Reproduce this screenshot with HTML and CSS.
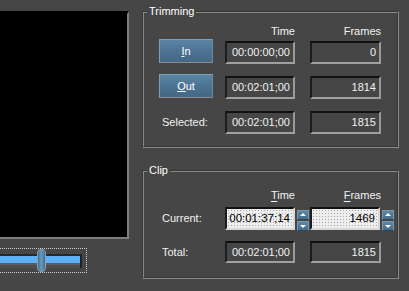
FILE: index.html
```html
<!DOCTYPE html>
<html>

<head>
    <meta name="viewport" content="width=device-width, initial-scale=1.0">
    <title>Trim clip</title>
    <link rel="stylesheet" href="styles.css">
</head>

<body>

    <div class="app">
      <div class="preview">
        <div class="video"></div>
        <div class="scrub">
          <div class="track"></div>
          <div class="thumb"></div>
        </div>
      </div>

      <div class="panel">
        <fieldset class="group trim">
          <legend>Trimming</legend>
          <div class="grid">
            <span></span>
            <span class="head">Time</span>
            <span class="head">Frames</span>

            <button class="btn"><u>I</u>n</button>
            <div class="field">00:00:00;00</div>
            <div class="field">0</div>

            <button class="btn"><u>O</u>ut</button>
            <div class="field">00:02:01;00</div>
            <div class="field">1814</div>

            <span class="label">Selected:</span>
            <div class="field">00:02:01;00</div>
            <div class="field">1815</div>
          </div>
        </fieldset>

        <fieldset class="group clip">
          <legend>Clip</legend>
          <div class="grid">
            <span></span>
            <span class="head"><u>T</u>ime</span>
            <span class="head"><u>F</u>rames</span>

            <span class="label">Current:</span>
            <div class="edit">
              <div class="field input">00:01:37;14</div>
              <div class="spin"><span class="up"></span><span class="down"></span></div>
            </div>
            <div class="edit">
              <div class="field input">1469</div>
              <div class="spin"><span class="up"></span><span class="down"></span></div>
            </div>

            <span class="label">Total:</span>
            <div class="field">00:02:01;00</div>
            <div class="field">1815</div>
          </div>
        </fieldset>
      </div>
    </div>

</body>

</html>
```

FILE: styles.css
```css
body {
    margin: 0;
    background: #464646;
    color: #f2f2f2;
    font-family: "Liberation Sans", Arial, sans-serif;
    font-size: 11px;
    overflow: hidden;
}

.app {
    display: flex;
    width: 409px;
    height: 291px;
}

/* left side: video + scrub bar */
.preview {
    width: 129px;
    flex: none;
}

.video {
    margin-top: 11px;
    height: 228px;
    box-sizing: border-box;
    background: #000;
    border-top: 3px solid #000;
    border-right: 2px solid #7e7e7e;
    border-bottom: 2px solid #7e7e7e;
}

.scrub {
    position: relative;
    margin-top: 9px;
    width: 87px;
    height: 25px;
    box-sizing: border-box;
    border: 1px dotted #cfcfcf;
    border-left: none;
}

.track {
    margin-top: 5px;
    width: 82px;
    height: 14px;
    box-sizing: border-box;
    border-top: 2px solid #2a2a2a;
    border-right: 2px solid #222;
    background: linear-gradient(#5eb1f6 0 7px, #5c5c5c 7px 9px, #4e4e4e 9px);
}

.thumb {
    position: absolute;
    left: 37px;
    top: 0;
    width: 9px;
    height: 23px;
    box-sizing: border-box;
    border-radius: 4px;
    border: 1px solid #8aa0b0;
    background: linear-gradient(90deg, #3f6d8f, #6a9bbf 45%, #3f6d8f);
}

/* right side: group boxes */
.panel {
    margin-left: 13px;
    width: 257px;
    flex: none;
}

.group {
    margin: 0;
    padding: 0;
    border: 2px groove #8a8a8a;
}

.group legend {
    margin-left: 3px;
    padding: 0 2px;
    line-height: 13px;
    color: #fff;
}

.trim {
    margin-top: 5px;
}

.clip {
    margin-top: 16px;
}

.grid {
    display: grid;
    grid-template-columns: 54px 82px 86px;
    padding: 0 16px 0 15px;
    align-items: start;
}

/* time column sits 12px right of the buttons, frames 15px right of time */
.grid > :nth-child(3n+2) {
    margin-left: 12px;
    width: 70px;
}

.grid > :nth-child(3n) {
    margin-left: 15px;
    width: 71px;
}

.trim .grid {
    padding-top: 7px;
    padding-bottom: 12px;
    grid-template-rows: 15px 35px 35px 24px;
}

.clip .grid {
    padding-top: 12px;
    padding-bottom: 13px;
    grid-template-rows: 17px 34px 24px;
}

.head {
    text-align: right;
    line-height: 13px;
}

.head u {
    text-decoration-thickness: 1px;
    text-underline-offset: 2px;
}

.label {
    margin-top: 1px;
    padding-left: 3px;
    line-height: 22px;
    white-space: nowrap;
}

.field {
    margin-top: 1px;
    height: 23px;
    box-sizing: border-box;
    padding-right: 3px;
    border-top: 2px solid #111;
    border-left: 2px solid #1c1c1c;
    border-right: 2px solid #9a9a9a;
    border-bottom: 2px solid #a0a0a0;
    text-align: right;
    line-height: 19px;
    white-space: nowrap;
}

.clip .grid > .field {
    height: 22px;
    line-height: 18px;
}

.btn {
    margin-top: -1px;
    width: 54px;
    height: 24px;
    padding: 0;
    border: 1px solid #7f9fb6;
    border-bottom-color: #8a8a8a;
    border-right-color: #6f8799;
    background: linear-gradient(#5b84a3, #4a7090 60%, #446885);
    color: #fff;
    font: inherit;
}

.edit {
    display: flex;
    align-items: flex-start;
    margin-top: 1px;
}

.edit .input {
    flex: none;
    margin-top: 0;
    width: 70px;
    height: 23px;
    border-right-color: #d8d8d8;
    border-bottom-color: #d8d8d8;
    background-color: #ededed;
    background-image: radial-gradient(#a9a9a9 0.6px, transparent 0.8px);
    background-size: 3px 3px;
    color: #000;
    font-size: 11.5px;
}

.spin {
    flex: none;
    display: flex;
    flex-direction: column;
    gap: 1px;
    margin-top: 3px;
    margin-left: 2px;
}

.spin span {
    position: relative;
    width: 12px;
    height: 10px;
    box-sizing: border-box;
    border: 1px solid #7d98ab;
    border-bottom-color: #2e4556;
    background: linear-gradient(#5d86a5, #456b8a);
}

.spin span::after {
    content: "";
    position: absolute;
    left: 2px;
    top: 2px;
    border-left: 3px solid transparent;
    border-right: 3px solid transparent;
}

.spin .up::after {
    border-bottom: 3px solid #fff;
}

.spin .down::after {
    top: 3px;
    border-top: 3px solid #fff;
}
```
